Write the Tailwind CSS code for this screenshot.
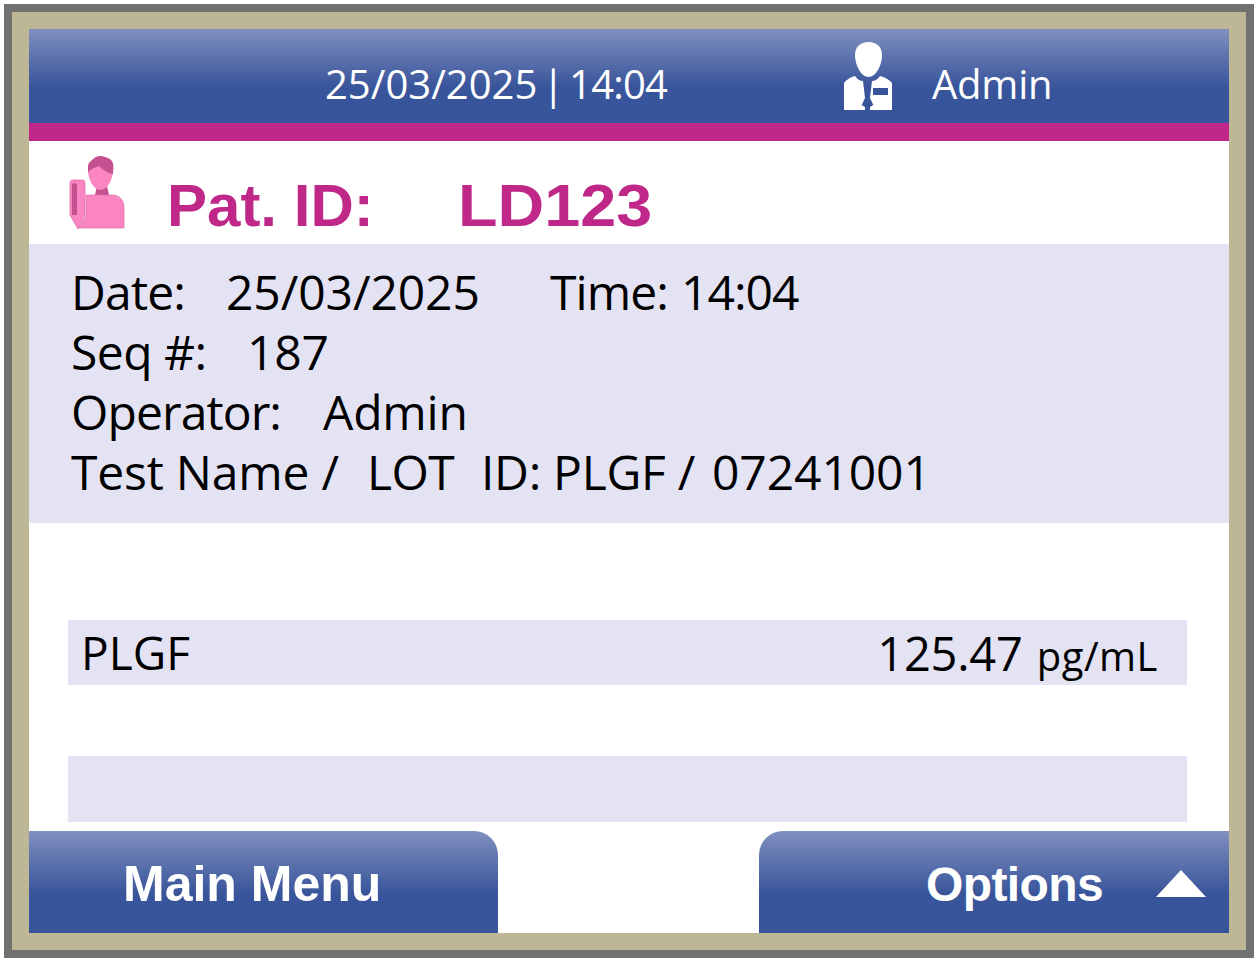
<!DOCTYPE html>
<html>
<head>
<meta charset="utf-8">
<script src="https://cdn.jsdelivr.net/npm/@tailwindcss/browser@4"></script>
</head>
<body class="bg-white m-0">
<div class="w-[1258px] h-[962px] bg-white pt-[4px] pl-[4px] font-['Open_Sans',sans-serif] overflow-hidden">
  <div class="w-[1250px] h-[954px] bg-[#717171] p-[8px]">
    <div class="w-[1234px] h-[938px] bg-[#bdb795] p-[17px]">
      <div class="relative w-[1200px] h-[904px] bg-white flex flex-col">
        <header class="h-[94px] shrink-0 bg-[linear-gradient(180deg,#8090c0_0%,#38549a_62%,#38549a_100%)] flex items-center text-white">
          <div class="w-[296px]"></div>
          <div class="w-[518px] text-[40px] leading-none whitespace-nowrap mt-[16px] [word-spacing:-5.500px]">25/03/2025 | <span class="tracking-[-0.8px]">14:04</span></div>
          <svg class="w-[50px] h-[68px]" viewBox="0 0 50 68">
            <path fill="#fff" d="M25.500 0c8 0 13.500 5 13.500 13c0 10-6 22-13.500 22S12 23 12 13C12 5 17.500 0 25.500 0z"/>
            <path fill="#fff" d="M1 41c2-3 7-6 11-7c2 3 5 5 8 5l2 17-3.300 7L22 65v3H1z"/>
            <path fill="#fff" fill-rule="evenodd" d="M49 41c-2-3-8-6-12-7c-2 3-5 5-8 5l-2 17 3.300 7L27 65v3h22zM30 46h15v7H30z"/>
          </svg>
          <div class="ml-[39px] text-[40px] leading-none mt-[16px] tracking-[-0.2px]">Admin</div>
        </header>
        <div class="h-[18px] shrink-0 bg-[#bf2889]"></div>
        <div class="h-[103px] shrink-0 flex items-start pl-[40px]">
          <svg class="w-[57px] h-[75px] mt-[15px]" viewBox="0 0 57 75">
            <path fill="#c4508f" d="M28 30h10l2 9H26z"/>
            <path fill="#fa85c0" stroke="#e070ad" stroke-width="0.700" d="M17 39H44c6 0 11 5 11 12v21H10l7-12z"/>
            <path fill="#fa85c0" d="M19 10h25c1 12-5 24-12.500 24S18 22 19 10z"/>
            <path fill="#c4508f" d="M19 11c0-3 1-5 3-6c2-2 5-5 9-5c3 0 9 2 11 4c2 2 3 4 2 14c-6-1-11-5-14-8c-3 1-8 3-11 6z"/>
            <path fill="#fa85c0" stroke="#e070ad" stroke-width="0.800" d="M1 27c0-2 1-3 3-3h9c2 0 3 1 3 3v32L9 73 1 59z"/>
            <path fill="#c4508f" d="M3 29c0-1 1-2 2-2c2 0 3 1 3 2v30H3z"/>
          </svg>
          <div class="ml-[41px] mt-[35px] font-['Liberation_Sans',sans-serif] font-bold text-[60px] leading-none text-[#bf2889] flex">
            <span class="w-[291px]">Pat. ID:</span><span class="inline-block origin-left scale-x-[1.078]">LD123</span>
          </div>
        </div>
        <section class="h-[279px] shrink-0 bg-[#e4e3f3] pl-[42px] pt-[18px] text-[48px] leading-[60px] text-black tracking-[-0.2px] whitespace-nowrap">
          <div class="flex"><span class="w-[155px] tracking-[-0.8px]">Date:</span><span class="w-[324px] tracking-[-0.1px]">25/03/2025</span><span class="w-[131px] tracking-[-0.9px]">Time:</span><span class="tracking-[-1px]">14:04</span></div>
          <div class="flex"><span class="w-[176px] tracking-[-0.5px]">Seq #:</span><span>187</span></div>
          <div class="flex"><span class="w-[252px] tracking-[-0.9px]">Operator:</span><span>Admin</span></div>
          <div class="flex"><span class="w-[296px]">Test Name /</span><span class="w-[114px] tracking-[-0.6px]">LOT</span><span class="w-[231px] tracking-[-0.3px]">ID: PLGF /</span><span class="tracking-[-0.1px]">07241001</span></div>
        </section>
        <div class="h-[97px] shrink-0"></div>
        <div class="ml-[39px] mr-[42px] h-[65px] shrink-0 bg-[#e4e3f3] flex items-center justify-between pl-[13px] pr-[29px] text-black">
          <span class="text-[46px] leading-none mt-[-1px]">PLGF</span>
          <span class="leading-none whitespace-nowrap flex items-baseline mt-[2px]"><span class="text-[47px] tracking-[-0.2px]">125.47</span><span class="text-[40px] ml-[14px] tracking-[0.5px]">pg/mL</span></span>
        </div>
        <div class="h-[71px] shrink-0"></div>
        <div class="ml-[39px] mr-[42px] h-[66px] shrink-0 bg-[#e4e3f3]"></div>
        <div class="h-[9px] shrink-0"></div>
        <footer class="flex justify-between h-[102px] shrink-0 font-['Liberation_Sans',sans-serif] font-bold text-white leading-none">
          <button class="w-[469px] h-[102px] rounded-tr-[24px] bg-[linear-gradient(180deg,#8090c0_0%,#38549a_62%,#38549a_100%)] text-[50px] text-left pl-[94px] pt-[4px]">Main Menu</button>
          <button class="w-[470px] h-[102px] rounded-tl-[24px] bg-[linear-gradient(180deg,#8090c0_0%,#38549a_62%,#38549a_100%)] text-[48px] tracking-[-0.600px] flex items-center pl-[167px] pt-[6px]">
            <span>Options</span>
            <svg class="ml-[53px] mt-[-4px] w-[50px] h-[27px]" viewBox="0 0 50 27"><path fill="#fff" d="M25 0 50 27H0z"/></svg>
          </button>
        </footer>
      </div>
    </div>
  </div>
</div>
</body>
</html>
